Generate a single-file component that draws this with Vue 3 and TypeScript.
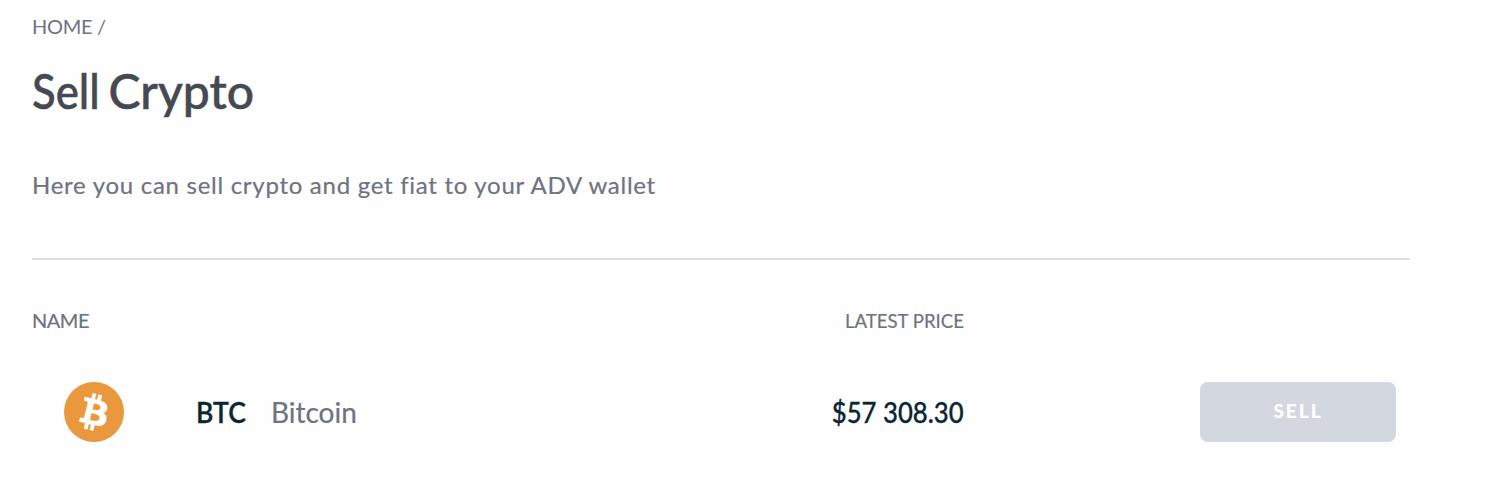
<script setup lang="ts">
interface Asset {
  code: string
  name: string
  price: string
}

const assets: Asset[] = [{ code: 'BTC', name: 'Bitcoin', price: '$57 308.30' }]
</script>

<template>
  <main class="page">
    <nav class="crumbs">HOME /</nav>
    <h1 class="title"><span class="word">Sell</span> Crypto</h1>
    <p class="lead">Here you can sell crypto and get fiat to your ADV wallet</p>
    <section class="assets">
      <div class="row head">
        <span class="head-name">NAME</span>
        <span class="head-price">LATEST PRICE</span>
      </div>
      <div v-for="asset in assets" :key="asset.code" class="row item">
        <div class="coin">
          <svg class="logo" viewBox="0 0 32 32" aria-hidden="true">
            <circle cx="16" cy="16" r="16" fill="#e9983d" />
            <path
              transform="translate(-0.25 0)"
              fill="#fff"
              stroke="#fff"
              stroke-width="0.25"
              d="M23.189 14.02c.314-2.096-1.283-3.223-3.465-3.975l.708-2.84-1.728-.43-.69 2.765c-.454-.114-.92-.22-1.385-.326l.695-2.783L15.596 6l-.708 2.839c-.376-.086-.746-.17-1.104-.26l.002-.009-2.384-.595-.46 1.846s1.283.294 1.256.312c.7.175.826.638.805 1.006l-.806 3.235c.048.012.11.03.18.057l-.183-.045-1.13 4.532c-.086.212-.303.531-.793.41.018.025-1.256-.313-1.256-.313l-.858 1.978 2.25.561c.418.105.828.215 1.231.318l-.715 2.872 1.727.43.708-2.84c.472.127.93.245 1.378.357l-.706 2.828 1.728.43.715-2.866c2.948.558 5.164.333 6.097-2.333.752-2.146-.037-3.385-1.588-4.192 1.13-.26 1.98-1.003 2.207-2.538zm-3.95 5.538c-.533 2.147-4.148.986-5.32.695l.95-3.805c1.172.293 4.929.872 4.37 3.11zm.535-5.569c-.487 1.953-3.495.96-4.47.717l.86-3.45c.975.243 4.118.696 3.61 2.733z"
            />
          </svg>
          <span class="code">{{ asset.code }}</span>
          <span class="name">{{ asset.name }}</span>
        </div>
        <span class="price">{{ asset.price }}</span>
        <button class="sell" type="button" disabled>SELL</button>
      </div>
    </section>
  </main>
</template>

<style>
body {
  background: #fefefe;
}
</style>

<style scoped>
.page {
  box-sizing: border-box;
  width: 1410px;
  height: 482px;
  padding: 11px 0 0 32px;
  font-family: Lato, "Liberation Sans", sans-serif;
  color: #6f7380;
}
.crumbs {
  height: 30px;
  font-size: 20px;
  line-height: 30px;
  letter-spacing: -0.3px;
  white-space: nowrap;
}
.title {
  height: 60px;
  margin: 20px 0 0;
  font-size: 48px;
  font-weight: 500;
  line-height: 60px;
  color: #454951;
  word-spacing: -1px;
  -webkit-text-stroke: 0.5px #454951;
}
.word {
  display: inline-block;
  margin-right: -9px;
  transform: scaleX(0.91);
  transform-origin: left;
}
.lead {
  height: 36px;
  margin: 46px 0 0;
  font-size: 24px;
  line-height: 36px;
  letter-spacing: 0.72px;
  white-space: nowrap;
  -webkit-text-stroke: 0.2px #6f7380;
}
.assets {
  margin-top: 55px;
  border-top: 2px solid #dadfe4;
}
.row {
  display: grid;
  grid-template-columns: 632px 300px 1fr;
  align-items: center;
  white-space: nowrap;
}
.head {
  height: 30px;
  margin-top: 45px;
  font-size: 20px;
  line-height: 30px;
  -webkit-text-stroke: 0.2px #6f7380;
}
.head-name {
  letter-spacing: -0.5px;
}
.head-price,
.price {
  justify-self: end;
  transform: scaleX(0.93);
  transform-origin: right;
}
.item {
  height: 60px;
  margin-top: 47px;
  font-size: 28px;
  line-height: 60px;
}
.coin {
  display: flex;
  align-items: flex-start;
  padding-left: 32px;
}
.logo {
  width: 60px;
  height: 60px;
}
.code {
  width: 75px;
  margin-left: 72px;
  font-weight: 600;
  color: #0b2533;
  transform: scaleX(0.95);
  transform-origin: left;
  -webkit-text-stroke: 0.3px #0b2533;
}
.name {
  -webkit-text-stroke: 0.2px #6f7380;
}
.price {
  color: #0b2533;
  font-weight: 500;
  transform: scaleX(0.918);
  -webkit-text-stroke: 0.3px #0b2533;
}
.sell {
  width: 196px;
  height: 60px;
  margin-right: 14px;
  padding: 0 0 2px;
  justify-self: end;
  border: 0;
  border-radius: 8px;
  background: #d3d8e0;
  color: #fff;
  font: 900 19px/58px Lato, "Liberation Sans", sans-serif;
  letter-spacing: 2px;
}
</style>
